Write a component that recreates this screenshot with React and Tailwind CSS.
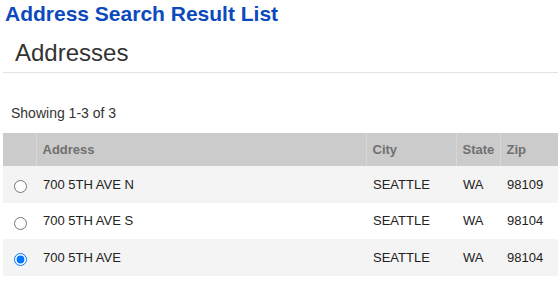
export default function App() {
  const rows = [
    { addr: "700 5TH AVE N", city: "SEATTLE", state: "WA", zip: "98109", checked: false },
    { addr: "700 5TH AVE S", city: "SEATTLE", state: "WA", zip: "98104", checked: false },
    { addr: "700 5TH AVE", city: "SEATTLE", state: "WA", zip: "98104", checked: true },
  ];
  return (
    <div className="w-[558px] h-[290px] bg-white font-['Liberation_Sans',Arial,sans-serif] pl-[3px]">
      <h1 className="pt-[2px] pl-[2px] text-[21px] leading-[24px] font-bold text-[#0b49bd]">
        Address Search Result List
      </h1>
      <div className="mt-[11px] pb-[3px] border-b border-[#e3e3e3]">
        <h2 className="pl-[12px] text-[24px] leading-[32px] text-[#333]">Addresses</h2>
      </div>
      <div className="mt-[30px] pl-[8px] text-[14px] leading-[20px] text-[#333]">Showing 1-3 of 3</div>
      <table className="mt-[10px] w-[555px] table-fixed border-collapse text-[13px]">
        <colgroup>
          <col className="w-[33px]" />
          <col className="w-[330px]" />
          <col className="w-[90px]" />
          <col className="w-[44px]" />
          <col className="w-[58px]" />
        </colgroup>
        <thead>
          <tr className="h-[33px] bg-[#cbcbcb] text-left text-[#707070] font-bold">
            <th></th>
            <th className="pl-[6px] border-l border-[#d6d6d6]">Address</th>
            <th className="pl-[6px] border-l border-[#d6d6d6]">City</th>
            <th className="pl-[6px] border-l border-[#d6d6d6]">State</th>
            <th className="pl-[6px] border-l border-[#d6d6d6]">Zip</th>
          </tr>
        </thead>
        <tbody className="text-[#222]">
          {rows.map((r, i) => (
            <tr key={i} className={`h-[36.5px] ${i % 2 === 0 ? "bg-[#f4f4f4]" : "bg-white"}`}>
              <td className="pl-[11px] align-middle">
                <input type="radio" name="addr" defaultChecked={r.checked} className="m-0 mt-[3px] w-[13px] h-[13px] align-middle" />
              </td>
              <td className="pl-[7px]">{r.addr}</td>
              <td className="pl-[7px]">{r.city}</td>
              <td className="pl-[7px]">{r.state}</td>
              <td className="pl-[7px]">{r.zip}</td>
            </tr>
          ))}
        </tbody>
      </table>
    </div>
  );
}
